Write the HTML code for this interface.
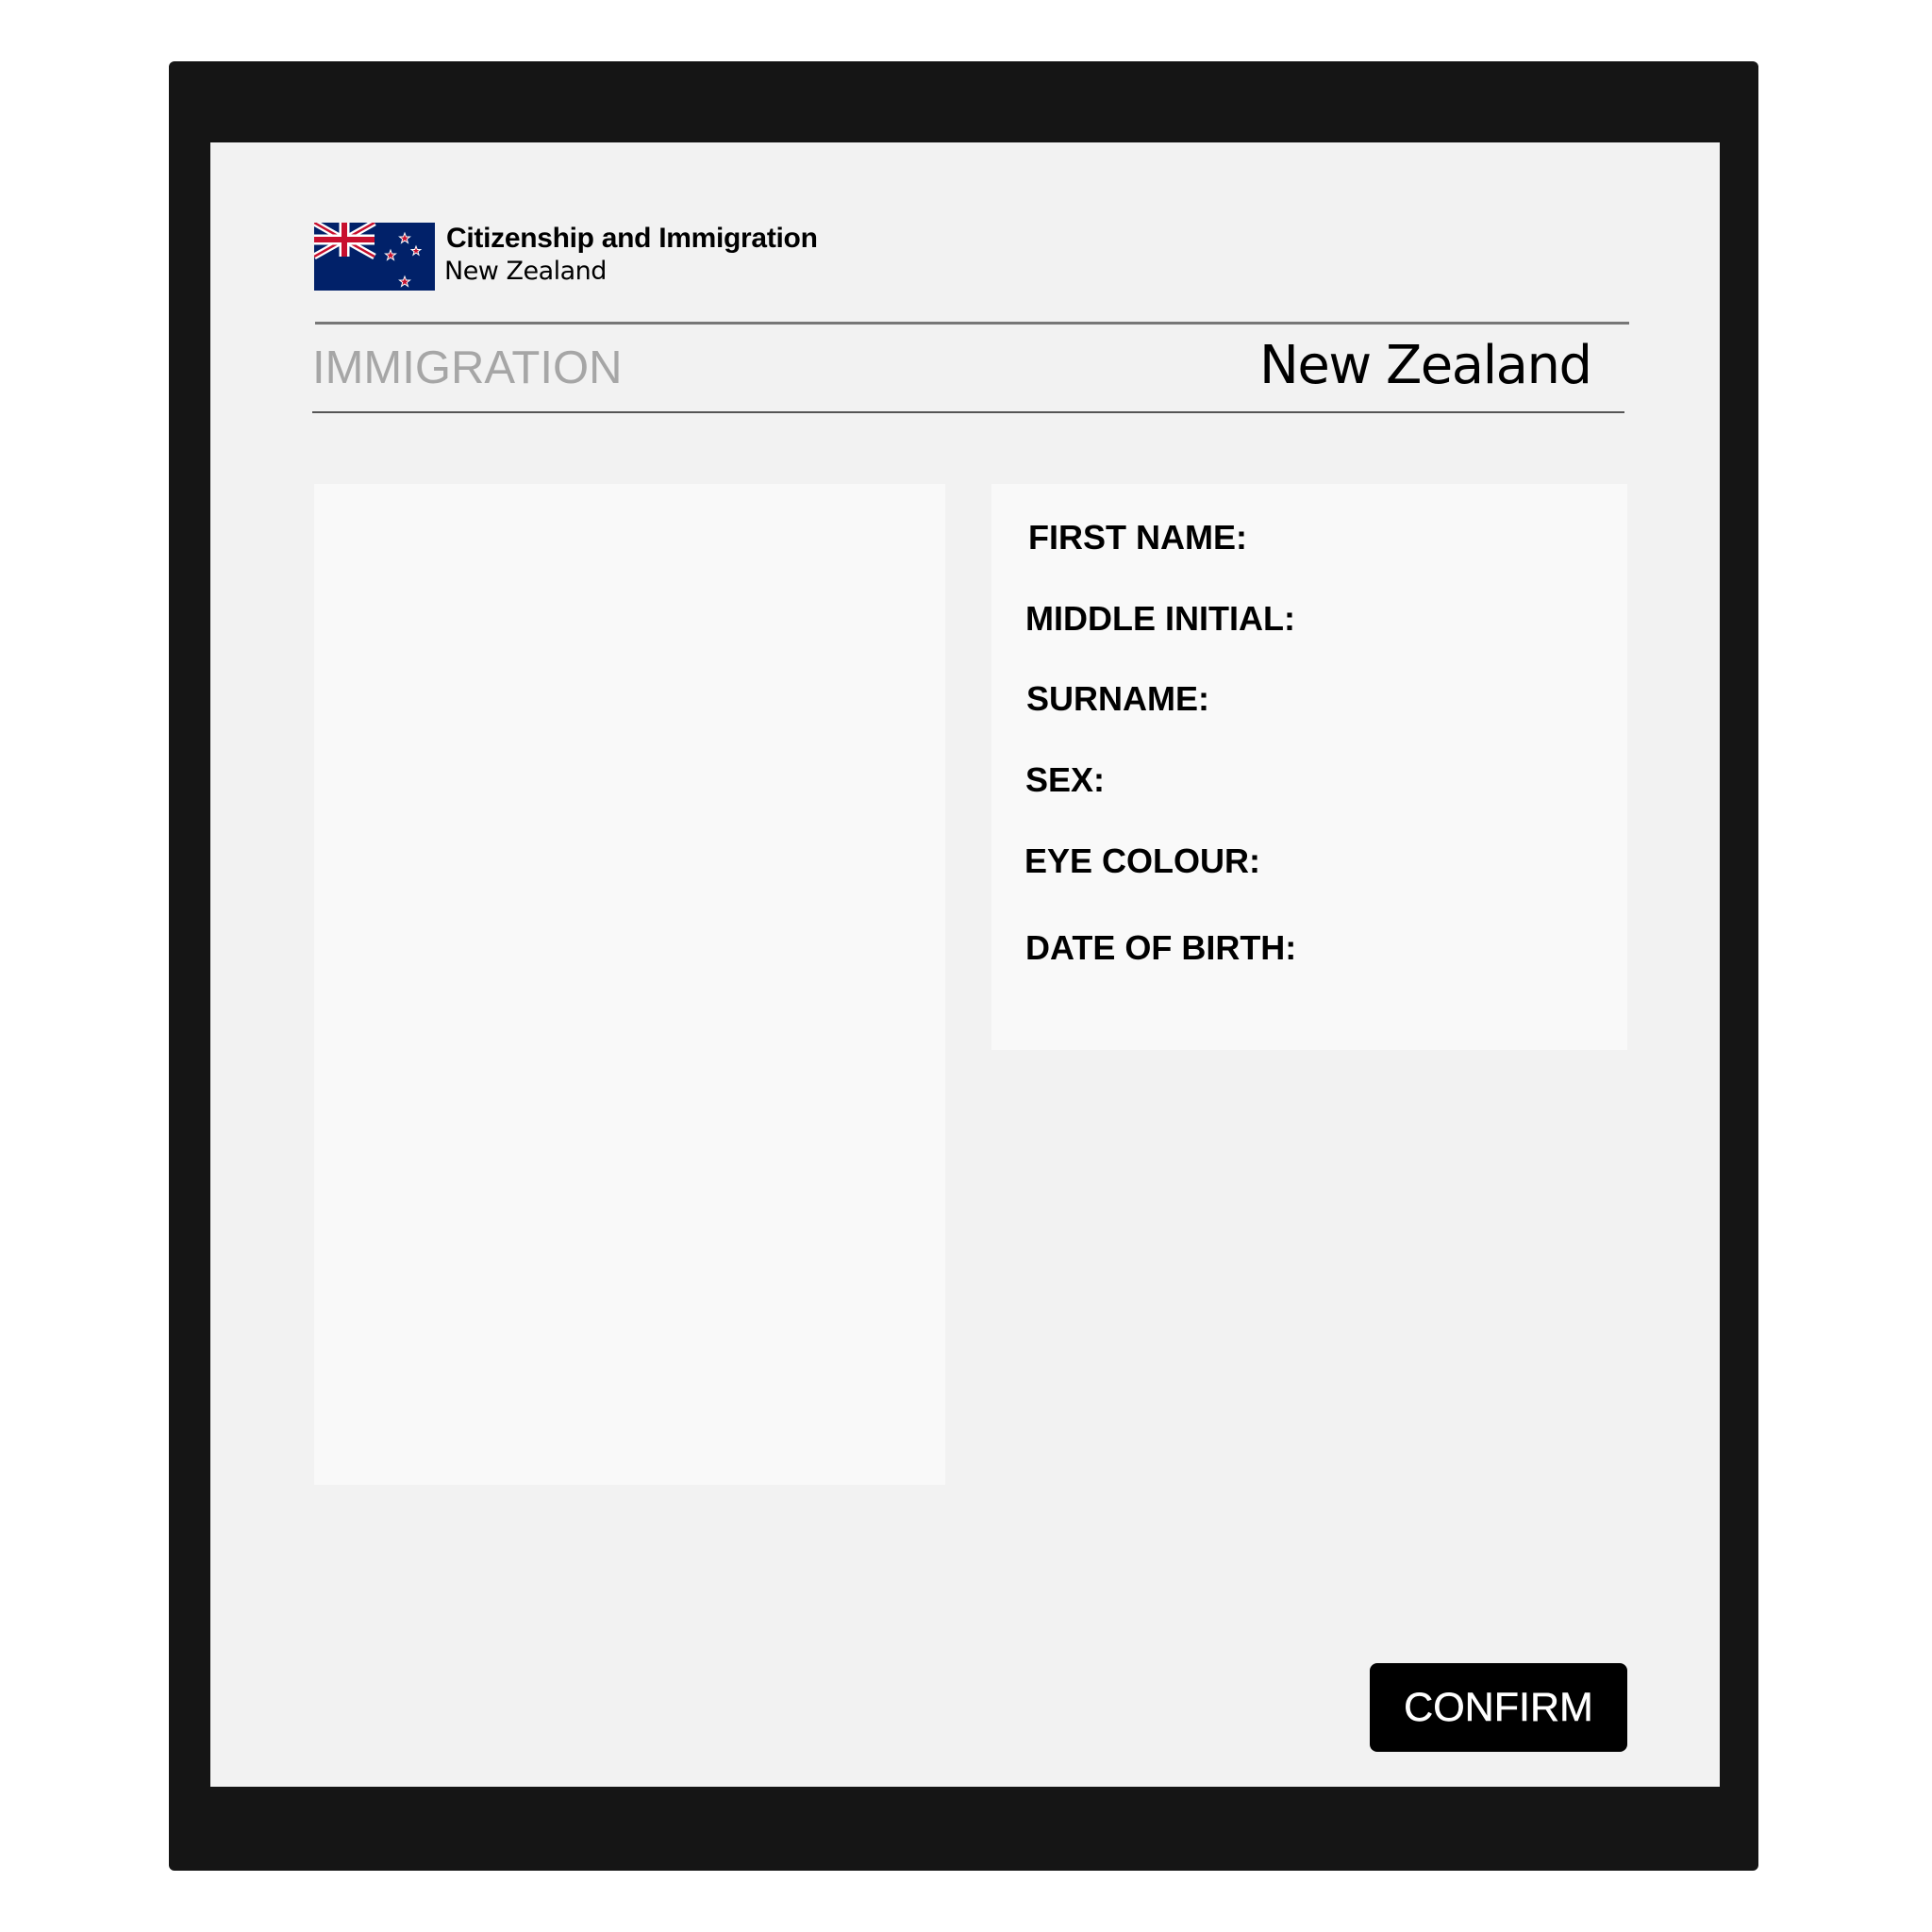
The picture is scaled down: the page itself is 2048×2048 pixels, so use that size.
<!DOCTYPE html>
<html><head><style>
body{margin:0;width:2048px;height:2048px;background:#fff;position:relative;font-family:"Liberation Sans",Arial,sans-serif;overflow:hidden}
.a{position:absolute}
</style></head><body>
<div class="a" style="left:179px;top:65px;width:1685px;height:1918px;background:#151515;border-radius:6px"></div>
<div class="a" style="left:223px;top:151px;width:1600px;height:1743px;background:#f2f2f2"></div>
<svg class="a" style="left:333px;top:236px" width="128" height="72" viewBox="0 0 128 72">
<rect width="128" height="72" fill="#012169"/>
<path d="M0 0L64 36M64 0L0 36" stroke="#fff" stroke-width="7"/>
<path d="M0 0L64 36M64 0L0 36" stroke="#c8102e" stroke-width="2.5"/>
<path d="M32 0V36M0 18H64" stroke="#fff" stroke-width="11"/>
<path d="M32 0V36M0 18H64" stroke="#c8102e" stroke-width="6"/>
<g fill="#c8102e" stroke="#fff" stroke-width="1">
<path d="M96 11l1.5 4h4l-3.2 2.5 1.2 4-3.5-2.5-3.5 2.5 1.2-4-3.2-2.5h4z"/>
<path d="M81 29l1.5 4h4l-3.2 2.5 1.2 4-3.5-2.5-3.5 2.5 1.2-4-3.2-2.5h4z"/>
<path d="M108 25l1.3 3.5h3.5l-2.8 2.2 1 3.5-3-2.2-3 2.2 1-3.5-2.8-2.2h3.5z"/>
<path d="M96 57l1.5 4h4l-3.2 2.5 1.2 4-3.5-2.5-3.5 2.5 1.2-4-3.2-2.5h4z"/>
</g></svg>
<div class="a" style="left:473px;top:236px;font-size:30px;font-weight:bold;color:#000;letter-spacing:-0.3px">Citizenship and Immigration</div>
<div class="a" style="left:471px;top:272px;font-size:27px;color:#000;font-family:'DejaVu Sans',sans-serif;letter-spacing:-0.5px">New Zealand</div>
<div class="a" style="left:334px;top:341px;width:1393px;height:3px;background:#777"></div>
<div class="a" style="left:331px;top:362px;font-size:49px;color:#a6a6a6">IMMIGRATION</div>
<div class="a" style="left:1335px;top:355px;font-size:56px;color:#000;font-family:'DejaVu Sans',sans-serif;letter-spacing:-1.5px">New Zealand</div>
<div class="a" style="left:331px;top:436px;width:1391px;height:2px;background:#555"></div>
<div class="a" style="left:333px;top:513px;width:669px;height:1061px;background:#f9f9f9"></div>
<div class="a" style="left:1051px;top:513px;width:674px;height:600px;background:#f9f9f9"></div>
<div class="a" style="left:1090px;top:0;font-size:36px;font-weight:bold;color:#000;line-height:1">
<div class="a" style="top:552px;white-space:nowrap">FIRST NAME:</div>
<div class="a" style="top:638px;left:-3px;white-space:nowrap">MIDDLE INITIAL:</div>
<div class="a" style="top:723px;left:-2px;white-space:nowrap">SURNAME:</div>
<div class="a" style="top:809px;left:-3px;white-space:nowrap">SEX:</div>
<div class="a" style="top:895px;left:-4px;white-space:nowrap">EYE COLOUR:</div>
<div class="a" style="top:987px;left:-3px;white-space:nowrap">DATE OF BIRTH:</div>
</div>
<div class="a" style="left:1452px;top:1763px;width:273px;height:94px;background:#000;border-radius:8px;color:#fff;font-size:43px;line-height:94px;text-align:center;-webkit-text-stroke:0.5px #fff">CONFIRM</div>
</body></html>
